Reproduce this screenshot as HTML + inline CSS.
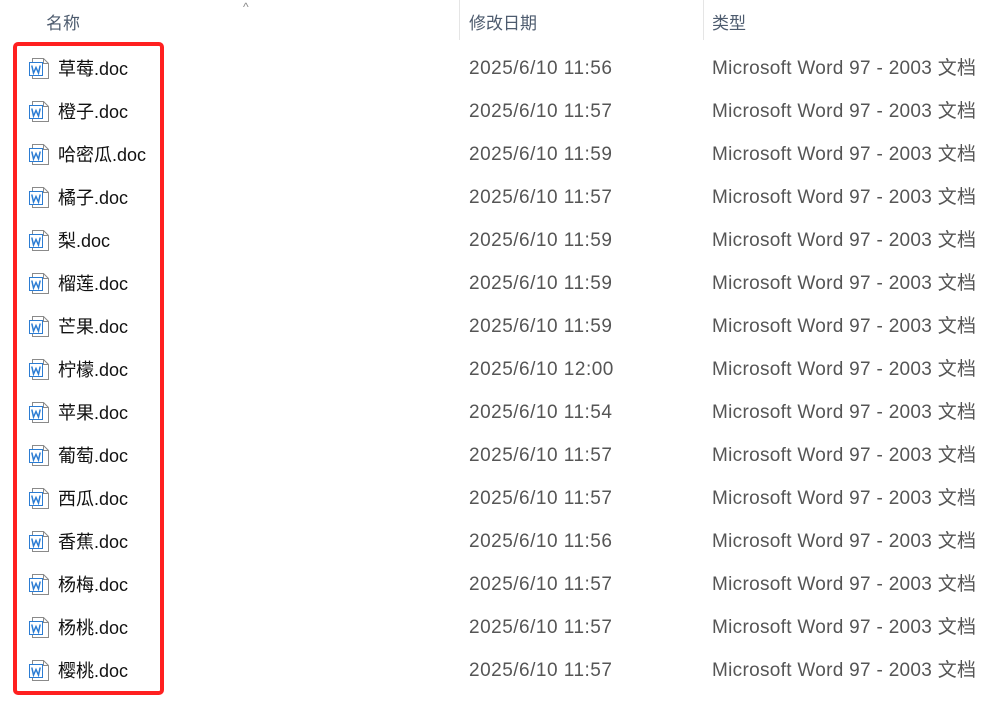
<!DOCTYPE html>
<html><head><meta charset="utf-8"><style>
body{margin:0;width:1008px;height:715px;background:#fff;position:relative;overflow:hidden;font-family:"Liberation Sans","Noto Sans CJK SC",sans-serif;}
.h{position:absolute;top:9px;font-size:17px;color:#4d5b6e;}
.sep{position:absolute;top:0;width:1px;height:40px;background:#e5e5e5;}
.row{position:absolute;left:0;width:1008px;height:43px;}
.row span{position:absolute;top:11px;font-size:18px;line-height:22px;}
.n{left:58px;color:#111;}
.row span.d{left:469px;color:#555;font-size:19px;letter-spacing:0.5px;}
.row span.t{left:712px;color:#555;font-size:19px;letter-spacing:0.3px;}
.box{position:absolute;left:13px;top:42px;width:143px;height:645px;border:4px solid #ff2020;border-radius:5px;}
</style></head><body>
<div class="h" style="left:46px">名称</div>
<div style="position:absolute;left:243px;top:0;font-size:12px;color:#888">^</div>
<div class="sep" style="left:459px"></div>
<div class="h" style="left:469px">修改日期</div>
<div class="sep" style="left:703px"></div>
<div class="h" style="left:712px">类型</div>
<div id="rows"></div>
<script>
var names=["草莓","橙子","哈密瓜","橘子","梨","榴莲","芒果","柠檬","苹果","葡萄","西瓜","香蕉","杨梅","杨桃","樱桃"];
var times=["11:56","11:57","11:59","11:57","11:59","11:59","11:59","12:00","11:54","11:57","11:57","11:56","11:57","11:57","11:57"];
var h="";
for(var i=0;i<15;i++){var y=47+i*43;
h+='<div class="row" style="top:'+y+'px"><svg style="position:absolute;left:28px;top:10px" width="22" height="22" viewBox="0 0 22 22"><path d="M4.5 1.5H15.5L20.5 6.5V21.5H4.5Z" fill="#fff" stroke="#8a8a8a"/><path d="M15.5 1.5V6.5H20.5" fill="none" stroke="#8a8a8a"/><rect x="1.5" y="5.5" width="13" height="13" fill="#fff" stroke="#2b7cd3"/><path d="M3.8 8.5L5.5 16L8 10.5L10.5 16L12.2 8.5" fill="none" stroke="#2b7cd3" stroke-width="1.5"/></svg><span class="n">'+names[i]+'.doc</span><span class="d">2025/6/10 '+times[i]+'</span><span class="t">Microsoft Word 97 - 2003 文档</span></div>';}
document.getElementById("rows").innerHTML=h;
</script>
<div class="box"></div>
</body></html>
